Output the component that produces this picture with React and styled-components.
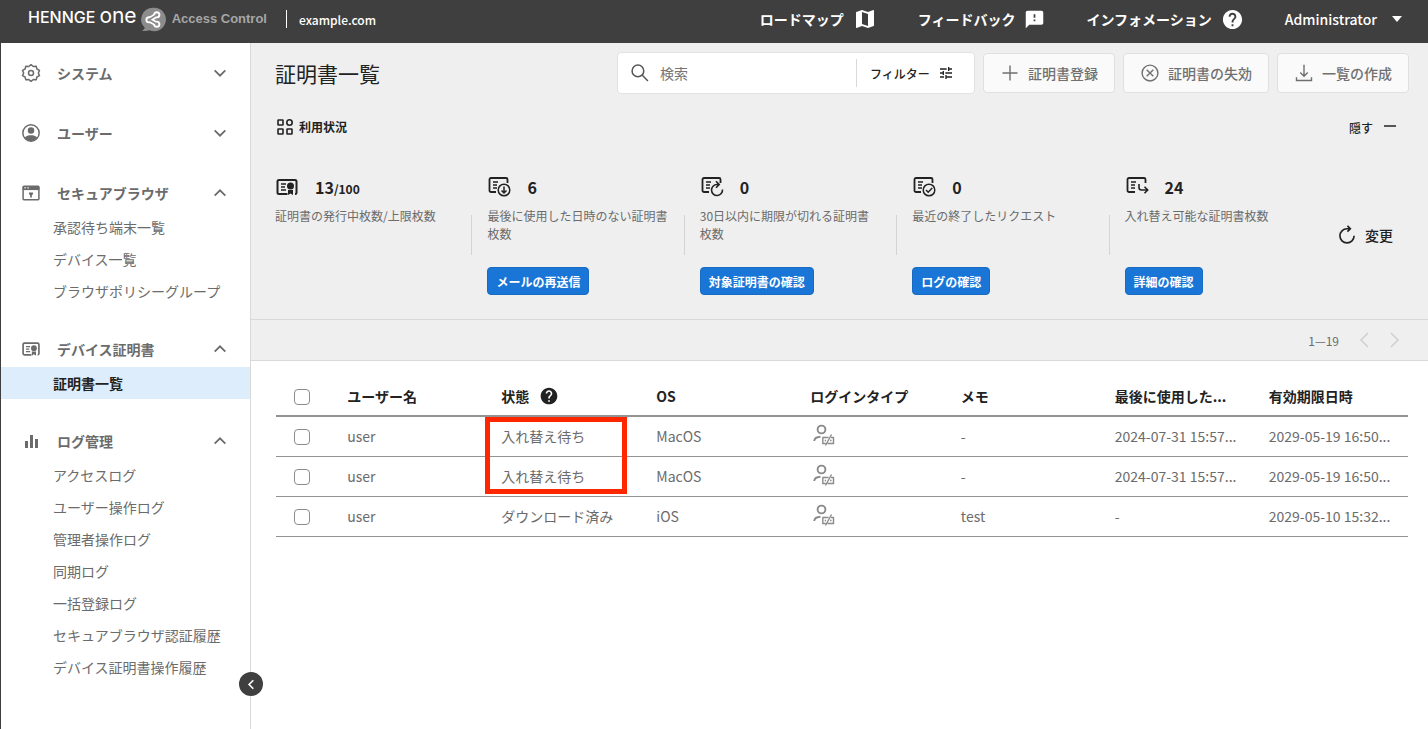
import React from 'react';
import styled, { createGlobalStyle, css } from 'styled-components';
import { MdFeedback, MdMap, MdHelp, MdTune } from 'react-icons/md';

const GlobalStyle = createGlobalStyle`
    * {
        box-sizing: border-box;
    }
    body {
        margin: 0;
        background: #fff;
        color: #222;
        font-family: 'Noto Sans CJK JP', 'Noto Sans', sans-serif;
        font-size: 14px;
    }
    button, input {
        font-family: inherit;
    }
    a {
        color: inherit;
        text-decoration: none;
    }
    svg {
        display: block;
        flex: none;
    }
`

const darkColor = '#3f3f3f';
const greyText = '#6b6b6b';
const panelColor = '#efefef';
const lineColor = '#d9d9d9';
const blue = '#1976d6';

const Page = styled.div`
    min-height: 100vh;
    display: flex;
    flex-direction: column;
    border-left: 1px solid ${darkColor};
`

const TopBar = styled.header`
    height: 43px;
    display: flex;
    align-items: center;
    padding: 0 26px 5px 27px;
    background: ${darkColor};
    color: #fff;
`

const Brand = styled.a`
    height: 18px;
    display: flex;
    align-items: center;
    gap: 6px;
    padding-right: 19px;
    border-right: 1px solid #fff;
    font-family: 'Liberation Sans', Arial, sans-serif;
    line-height: 18px;
`

const BrandName = styled.span`
    display: flex;
    align-items: baseline;
    gap: 4px;
    font-family: Inter, sans-serif;
    font-size: 16px;
    font-weight: 500;
`

const BrandOne = styled.span`
    font-size: 21px;
    font-weight: 400;
`

const ProductName = styled.span`
    font-size: 13px;
    font-weight: 700;
    color: #a6a6a6;
`

const Domain = styled.span`
    margin-left: 12px;
    font-size: 12px;
    font-weight: 500;
`

const TopNav = styled.nav`
    display: flex;
    align-items: center;
    gap: 41px;
    margin-left: auto;
    font-weight: 700;
`

const TopLink = styled.a`
    display: flex;
    align-items: center;
    gap: 9px;
    line-height: 20px;
`

const AccountButton = styled.button`
    display: flex;
    align-items: center;
    gap: 15px;
    padding: 0;
    border: 0;
    background: none;
    color: #fff;
    font-size: 14px;
    font-weight: 500;
    line-height: 20px;
`

const Body = styled.div`
    flex: 1;
    display: flex;
`

const Sidebar = styled.aside`
    position: relative;
    width: 250px;
    flex: none;
    padding-top: 16px;
    border-right: 1px solid ${lineColor};
    color: ${greyText};
`

const NavGroup = styled.section`
    margin-bottom: ${p => p.$open ? '28px' : '32px'};
`

const GroupButton = styled.button`
    width: 100%;
    height: 28px;
    display: flex;
    align-items: center;
    padding: 0 22px 0 20px;
    border: 0;
    background: none;
    color: inherit;
    font-size: 14px;
    font-weight: 700;
    text-align: left;
`

const GroupName = styled.span`
    flex: 1;
    margin-left: 16px;
`

const SubList = styled.ul`
    margin: 4px 0 0;
    padding: 0;
    list-style: none;
`

const SubLink = styled.a`
    display: block;
    height: 32px;
    padding-left: 52px;
    line-height: 32px;
    ${p => p.$active && css`
        background: #deedfc;
        color: #222;
        font-weight: 700;
    `}
`

const CollapseButton = styled.button`
    position: absolute;
    right: -13px;
    bottom: 33px;
    width: 24px;
    height: 24px;
    display: flex;
    align-items: center;
    justify-content: center;
    padding: 0;
    border: 0;
    border-radius: 50%;
    background: ${darkColor};
    color: #fff;
`

const Main = styled.main`
    flex: 1;
    min-width: 0;
`

const Toolbar = styled.div`
    display: flex;
    align-items: center;
    gap: 8px;
    padding: 9px 19px 9px 24px;
    background: ${panelColor};
`

const Title = styled.h1`
    flex: 1;
    margin: 0;
    font-size: 21px;
    font-weight: 400;
    line-height: 40px;
`

const SearchBox = styled.div`
    width: 358px;
    height: 42px;
    display: flex;
    align-items: center;
    padding-left: 12px;
    border: 1px solid #e3e3e3;
    border-radius: 4px;
    background: #fff;
    color: #555;
`

const SearchInput = styled.input`
    flex: 1;
    min-width: 0;
    height: 28px;
    margin-left: 10px;
    padding: 0;
    border: 0;
    outline: 0;
    background: none;
    font-size: 14px;
    &::placeholder {
        color: #757575;
        opacity: 1;
    }
`

const FilterButton = styled.button`
    width: 118px;
    height: 28px;
    display: flex;
    align-items: center;
    gap: 8px;
    padding: 0 0 0 13px;
    border: 0;
    border-left: 1px solid ${lineColor};
    background: none;
    color: #222;
    font-size: 12px;
    font-weight: 500;
`

const ActionButton = styled.button`
    height: 40px;
    display: flex;
    align-items: center;
    gap: 8px;
    padding: 0 16px;
    border: 1px solid #e0e0e0;
    border-radius: 4px;
    background: #fafafa;
    color: #707070;
    font-size: 14px;
    font-weight: 500;
`

const UsageHead = styled.div`
    display: flex;
    align-items: center;
    justify-content: space-between;
    padding: 14px 31px 0 25px;
    background: ${panelColor};
    font-size: 12px;
    line-height: 20px;
`

const UsageTitle = styled.h2`
    display: flex;
    align-items: center;
    gap: 5px;
    margin: 0;
    font-size: 12px;
    font-weight: 700;
`

const PlainButton = styled.button`
    display: flex;
    align-items: center;
    gap: ${p => p.$gap}px;
    padding: 0;
    border: 0;
    background: none;
    color: #222;
    font-size: ${p => p.$size}px;
    font-weight: 500;
`

const Usage = styled.div`
    display: flex;
    padding: 38px 35px 24px 24px;
    background: ${panelColor};
    border-bottom: 1px solid ${lineColor};
`

const Stats = styled.div`
    flex: 1;
    display: grid;
    grid-template-columns: repeat(5, 1fr);
`

const Stat = styled.section`
    display: flex;
    flex-direction: column;
    align-items: flex-start;
`

const StatValue = styled.div`
    height: 24px;
    display: flex;
    align-items: center;
    gap: 16px;
    font-size: 16px;
    font-weight: 700;
`

const Limit = styled.small`
    font-size: 12px;
`

const StatText = styled.div`
    width: 100%;
    height: 44px;
    display: flex;
    margin-top: 8px;
`

const StatLabel = styled.p`
    flex: 1;
    margin: 0;
    padding-right: 16px;
    color: ${greyText};
    font-size: 12px;
    line-height: 18px;
`

const StatDivider = styled.span`
    height: 40px;
    margin: 8px 15px 0 0;
    border-right: 1px solid #d4d4d4;
`

const BlueButton = styled.button`
    height: 28px;
    margin-top: 16px;
    padding: 0 8px;
    border: 1px solid #176bc2;
    border-radius: 4px;
    background: ${blue};
    color: #fff;
    font-size: 12px;
    font-weight: 700;
`

const Pager = styled.div`
    height: 41px;
    display: flex;
    align-items: center;
    justify-content: flex-end;
    padding-right: 25px;
    background: ${panelColor};
    border-bottom: 1px solid ${lineColor};
    color: ${greyText};
    font-size: 12px;
`

const PagerButton = styled.button`
    display: flex;
    margin-left: ${p => p.$gap}px;
    padding: 0;
    border: 0;
    background: none;
    color: #d0d0d0;
`

const TableArea = styled.div`
    padding: 16px 20px 0 25px;
`

const Table = styled.table`
    width: 100%;
    table-layout: fixed;
    border-collapse: collapse;
`

const Th = styled.th`
    width: ${p => p.$width};
    height: 39px;
    padding: 0;
    border-bottom: 2px solid #939393;
    font-weight: 700;
    text-align: left;
    white-space: nowrap;
`

const Td = styled.td`
    height: 40px;
    padding: 0;
    border-bottom: 1px solid #939393;
    color: ${greyText};
    white-space: nowrap;
`

const HeadLabel = styled.span`
    display: flex;
    align-items: center;
    gap: 10px;
`

const Checkbox = styled.input`
    appearance: none;
    display: block;
    width: 16px;
    height: 16px;
    margin: 2px 0 0 18px;
    border: 1px solid #8c8c8c;
    border-radius: 4px;
    background: #fff;
`

const LoginType = styled.span`
    display: block;
    padding-left: 2px;
    color: #8a8a8a;
`

const Marked = styled.span`
    position: relative;
    display: block;
`

const RedFrame = styled.span`
    position: absolute;
    left: -16px;
    top: -9px;
    width: 142px;
    height: 77px;
    border: 5px solid #ff2600;
    pointer-events: none;
`

const Line = ({size = 20, width = 2, box = 24, children}) => (
    <svg width={size} height={size} viewBox={`0 0 ${box} ${box}`} fill='none' stroke='currentColor' strokeWidth={width} aria-hidden='true'>
        {children}
    </svg>
)

const Chevron = ({dir, size = 16, width = 2}) => {
    const paths = {
        down: 'M3 6l6 6 6-6',
        up: 'M3 12l6-6 6 6',
        left: 'M12 2L5 9l7 7',
        right: 'M6 2l7 7-7 7'
    };
    return <Line size={size} box={18} width={width}><path d={paths[dir]}/></Line>
}

const LogoMark = styled(({className}) => (
    <svg className={className} width='25' height='25' viewBox='0 0 25 25' aria-hidden='true'>
        <path d='M13 .8a11.700 11.700 0 1 1-4.500 22.400c-2.300.9-5 1.100-7.500.300 1.600-.7 2.400-1.500 2.800-2.700A11.700 11.700 0 0 1 13 .8z' fill='#8c8c8c'/>
        <g stroke='#fff' strokeWidth='1.900' fill='none'>
            <path d='M8 12.800l8-5M8 12.800l8 4.400' strokeWidth='5'/>
            <circle cx='15.800' cy='7.800' r='2.600' fill='#8c8c8c'/>
            <circle cx='8' cy='12.800' r='2.600' fill='#8c8c8c'/>
            <circle cx='15.800' cy='17.200' r='2.600' fill='#8c8c8c'/>
            <path d='M8 12.800l8-5M8 12.800l8 4.400' stroke='#8c8c8c' strokeWidth='1.700'/>
        </g>
    </svg>
))`
    align-self: center;
`

const GearIcon = () => (
    <Line size={20} width={1.8}>
        <path strokeLinejoin='round' d='M12 2l2.700 2.200 3.500-.4.900 3.400 3.100 1.600L20.800 12l1.400 3.200-3.100 1.600-.9 3.400-3.500-.4L12 22l-2.700-2.200-3.500.4-.9-3.400-3.100-1.600L3.200 12 1.800 8.800l3.100-1.600.9-3.400 3.500.4z'/>
        <circle cx='12' cy='12' r='3'/>
    </Line>
)

const PersonIcon = () => (
    <Line size={20} width={1.8}>
        <circle cx='12' cy='12' r='9.800'/>
        <circle cx='12' cy='9' r='3.900' fill='currentColor' stroke='none'/>
        <path d='M4.500 17.500c1.800-2 4.600-2.700 7.500-2.700s5.700.7 7.500 2.700A9.800 9.800 0 0 1 12 21.800a9.800 9.800 0 0 1-7.500-4.300z' fill='currentColor' stroke='none'/>
    </Line>
)

const BrowserIcon = () => (
    <Line size={20} width={1.8}>
        <rect x='2.500' y='4' width='19' height='16' rx='1'/>
        <path d='M2 6.500h20' strokeWidth='4'/>
        <path d='M4 5.800h2m1.500 0h2' stroke='#fff' strokeWidth='1.200'/>
        <path d='M9.500 11.500h5v1.500L13 15v2.500h-2V15l-1.500-2z' fill='currentColor' stroke='none'/>
    </Line>
)

const CertIcon = ({size = 20}) => (
    <Line size={size} width={2}>
        <path d='M12.500 19H4a1.500 1.500 0 0 1-1.500-1.500v-11A1.500 1.500 0 0 1 4 5h16a1.500 1.500 0 0 1 1.500 1.500v11A1.500 1.500 0 0 1 20 19'/>
        <path d='M6 9h5M6 12h4M6 15h5' strokeWidth='1.500'/>
        <circle cx='15.500' cy='11' r='3.500' fill='currentColor' stroke='none'/>
        <path d='M13 15h5v5l-2.500-1.600L13 20z' fill='currentColor' stroke='none'/>
    </Line>
)

const BarsIcon = () => (
    <svg width='20' height='20' viewBox='0 0 20 20' fill='currentColor' aria-hidden='true'>
        <path d='M4 10h3v7H4zM9 4h3v13H9zM14 8h3v9h-3z'/>
    </svg>
)

const UsageIcon = () => (
    <Line size={18} box={18} width={1.6}>
        <rect x='2' y='2' width='5' height='5' rx='.5'/>
        <circle cx='13.500' cy='4.500' r='2.700'/>
        <rect x='2' y='11' width='5' height='5' rx='.5'/>
        <rect x='11' y='11' width='5' height='5' rx='.5'/>
    </Line>
)

// certificate sheet with a small mark on its lower right corner
const SheetIcon = ({mark}) => (
    <Line size={24} width={1.8}>
        <path d={mark === 'move' ? 'M10 17H4a1.500 1.500 0 0 1-1.500-1.500v-11A1.500 1.500 0 0 1 4 3h15a1.500 1.500 0 0 1 1.500 1.500V8' : 'M9 17H4a1.500 1.500 0 0 1-1.500-1.500v-11A1.500 1.500 0 0 1 4 3h15a1.500 1.500 0 0 1 1.500 1.500V8'}/>
        <path d='M6 7h5M6 10h4M6 13h4' strokeWidth='1.500'/>
        {mark === 'down' && <g strokeWidth='1.500'><circle cx='17' cy='15' r='5.800'/><path d='M17 11.500V18M14.500 15.500L17 18l2.500-2.500'/></g>}
        {mark === 'check' && <g strokeWidth='1.500'><circle cx='17' cy='15' r='5.800'/><path d='M14 15l2.200 2.200 4-4.200'/></g>}
        {mark === 'renew' && <path strokeWidth='1.600' d='M22.500 14.500a5.500 5.500 0 1 1-5.500-5h2M16 6.300L19.200 9.500 16 12.700'/>}
        {mark === 'move' && <path strokeWidth='1.600' d='M14 9v3.500a2.500 2.500 0 0 0 2.500 2.500h6.200M19.500 11.800l3.200 3.200-3.200 3.200'/>}
    </Line>
)

const LoginIcon = () => (
    <Line size={24} width={1.9}>
        <circle cx='9.500' cy='5.500' r='3.900'/>
        <path d='M2.200 17c.3-2.700 2.300-4.200 6.300-4.300'/>
        <path d='M16.500 13.500h-5.700v6h3M19 13.500h2.500v6h-6' strokeWidth='1.400' strokeLinejoin='round'/>
        <path d='M13.500 21.500l6-11' strokeWidth='1.400'/>
        <path d='M18 16.500h1.500M12.700 16.500h1.300' strokeWidth='1.300'/>
    </Line>
)

const groups = [
    {name: 'システム', icon: <GearIcon/>, items: []},
    {name: 'ユーザー', icon: <PersonIcon/>, items: []},
    {name: 'セキュアブラウザ', icon: <BrowserIcon/>, items: ['承認待ち端末一覧', 'デバイス一覧', 'ブラウザポリシーグループ']},
    {name: 'デバイス証明書', icon: <CertIcon/>, items: ['証明書一覧']},
    {name: 'ログ管理', icon: <BarsIcon/>, items: ['アクセスログ', 'ユーザー操作ログ', '管理者操作ログ', '同期ログ', '一括登録ログ', 'セキュアブラウザ認証履歴', 'デバイス証明書操作履歴']}
];

const stats = [
    {icon: <CertIcon size={24}/>, value: '13', limit: '/100', label: '証明書の発行中枚数/上限枚数'},
    {icon: <SheetIcon mark='down'/>, value: '6', label: '最後に使用した日時のない証明書枚数', action: 'メールの再送信'},
    {icon: <SheetIcon mark='renew'/>, value: '0', label: '30日以内に期限が切れる証明書枚数', action: '対象証明書の確認'},
    {icon: <SheetIcon mark='check'/>, value: '0', label: '最近の終了したリクエスト', action: 'ログの確認'},
    {icon: <SheetIcon mark='move'/>, value: '24', label: '入れ替え可能な証明書枚数', action: '詳細の確認'}
];

const rows = [
    {user: 'user', status: '入れ替え待ち', os: 'MacOS', memo: '-', used: '2024-07-31 15:57...', expires: '2029-05-19 16:50...'},
    {user: 'user', status: '入れ替え待ち', os: 'MacOS', memo: '-', used: '2024-07-31 15:57...', expires: '2029-05-19 16:50...'},
    {user: 'user', status: 'ダウンロード済み', os: 'iOS', memo: 'test', used: '-', expires: '2029-05-10 15:32...'}
];

const Header = () => (
    <TopBar>
        <Brand href='#'>
            <BrandName>HENNGE <BrandOne>one</BrandOne> <LogoMark/></BrandName>
            <ProductName>Access Control</ProductName>
        </Brand>
        <Domain>example.com</Domain>
        <TopNav>
            <TopLink href='#'>ロードマップ <MdMap size={24}/></TopLink>
            <TopLink href='#'>フィードバック <MdFeedback size={21}/></TopLink>
            <TopLink href='#'>インフォメーション <MdHelp size={23}/></TopLink>
            <AccountButton type='button'>
                Administrator
                <svg width='10' height='6' viewBox='0 0 10 6' fill='currentColor' aria-hidden='true'><path d='M0 0h10L5 6z'/></svg>
            </AccountButton>
        </TopNav>
    </TopBar>
)

const SideNav = () => (
    <Sidebar>
        {groups.map(group => {
            const open = group.items.length > 0;
            return (
                <NavGroup key={group.name} $open={open}>
                    <GroupButton type='button' aria-expanded={open}>
                        {group.icon}
                        <GroupName>{group.name}</GroupName>
                        <Chevron dir={open ? 'up' : 'down'}/>
                    </GroupButton>
                    {open &&
                        <SubList>
                            {group.items.map(item => (
                                <li key={item}><SubLink href='#' $active={item === '証明書一覧'}>{item}</SubLink></li>
                            ))}
                        </SubList>
                    }
                </NavGroup>
            )
        })}
        <CollapseButton type='button' aria-label='メニューを閉じる'><Chevron dir='left' size={11} width={2.6}/></CollapseButton>
    </Sidebar>
)

const UsagePanel = () => (
    <>
        <UsageHead>
            <UsageTitle><UsageIcon/>利用状況</UsageTitle>
            <PlainButton type='button' $gap={10} $size={12}>
                隠す
                <Line size={14} box={14} width={1.5}><path d='M1 6h12'/></Line>
            </PlainButton>
        </UsageHead>
        <Usage>
            <Stats>
                {stats.map((stat, i) => (
                    <Stat key={stat.label}>
                        <StatValue>
                            {stat.icon}
                            <span>{stat.value}{stat.limit && <Limit>{stat.limit}</Limit>}</span>
                        </StatValue>
                        <StatText>
                            <StatLabel>{stat.label}</StatLabel>
                            {i < stats.length - 1 && <StatDivider/>}
                        </StatText>
                        {stat.action && <BlueButton type='button'>{stat.action}</BlueButton>}
                    </Stat>
                ))}
            </Stats>
            <PlainButton type='button' $gap={8} $size={14}>
                <Line size={20} width={2}><path d='M20.500 13A8.500 8.500 0 1 1 12 4.500h3M12.500 1L16 4.500 12.500 8'/></Line>
                変更
            </PlainButton>
        </Usage>
    </>
)

const CertTable = () => (
    <TableArea>
        <Table>
            <thead>
                <tr>
                    <Th $width='6.3%'><Checkbox type='checkbox' aria-label='すべて選択'/></Th>
                    <Th $width='13.6%'>ユーザー名</Th>
                    <Th $width='13.7%'><HeadLabel>状態 <MdHelp size={20}/></HeadLabel></Th>
                    <Th $width='13.6%'>OS</Th>
                    <Th $width='13.3%'>ログインタイプ</Th>
                    <Th $width='13.6%'>メモ</Th>
                    <Th $width='13.6%'>最後に使用した...</Th>
                    <Th>有効期限日時</Th>
                </tr>
            </thead>
            <tbody>
                {rows.map((row, i) => (
                    <tr key={i}>
                        <Td><Checkbox type='checkbox' aria-label={`${row.user} を選択`}/></Td>
                        <Td>{row.user}</Td>
                        <Td><Marked>{row.status}{i === 0 && <RedFrame/>}</Marked></Td>
                        <Td>{row.os}</Td>
                        <Td><LoginType><LoginIcon/></LoginType></Td>
                        <Td>{row.memo}</Td>
                        <Td>{row.used}</Td>
                        <Td>{row.expires}</Td>
                    </tr>
                ))}
            </tbody>
        </Table>
    </TableArea>
)

const App = () => (
    <Page>
        <GlobalStyle/>
        <Header/>
        <Body>
            <SideNav/>
            <Main>
                <Toolbar>
                    <Title>証明書一覧</Title>
                    <SearchBox>
                        <Line width={1.8}><circle cx='9.500' cy='9.500' r='7'/><path d='M14.500 14.500l7 7'/></Line>
                        <SearchInput type='search' placeholder='検索' aria-label='検索'/>
                        <FilterButton type='button'>フィルター <MdTune size={16}/></FilterButton>
                    </SearchBox>
                    <ActionButton type='button'>
                        <Line width={1.7}><path d='M12 3v18M3 12h18'/></Line>
                        証明書登録
                    </ActionButton>
                    <ActionButton type='button'>
                        <Line width={1.7}><circle cx='12' cy='12' r='9.500'/><path d='M8 8l8 8M16 8l-8 8'/></Line>
                        証明書の失効
                    </ActionButton>
                    <ActionButton type='button'>
                        <Line width={1.7}><path d='M12 2v14M7.500 11.500L12 16l4.500-4.500M3 17v4h18v-4'/></Line>
                        一覧の作成
                    </ActionButton>
                </Toolbar>
                <UsagePanel/>
                <Pager>
                    1—19
                    <PagerButton type='button' aria-label='前へ' $gap={17}><Chevron dir='left' size={18} width={1.6}/></PagerButton>
                    <PagerButton type='button' aria-label='次へ' $gap={11}><Chevron dir='right' size={18} width={1.6}/></PagerButton>
                </Pager>
                <CertTable/>
            </Main>
        </Body>
    </Page>
)

export default App;
